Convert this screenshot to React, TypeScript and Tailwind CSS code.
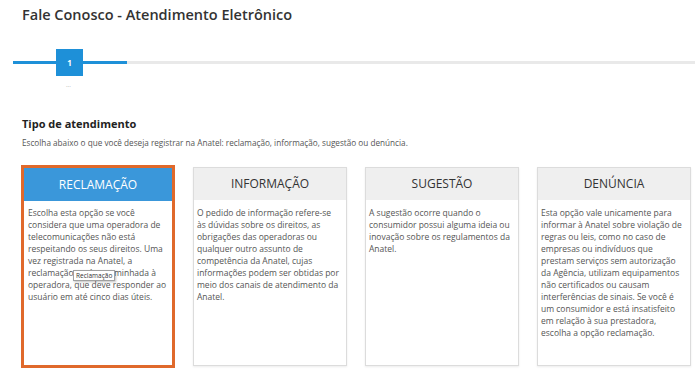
const cards = [
  {
    title: "RECLAMAÇÃO",
    lines: [
      "Escolha esta opção se você",
      "considera que uma operadora de",
      "telecomunicações não está",
      "respeitando os seus direitos. Uma",
      "vez registrada na Anatel, a",
      "reclamação será encaminhada à",
      "operadora, que deve responder ao",
      "usuário em até cinco dias úteis.",
    ],
    active: true,
  },
  {
    title: "INFORMAÇÃO",
    lines: [
      "O pedido de informação refere-se",
      "às dúvidas sobre os direitos, as",
      "obrigações das operadoras ou",
      "qualquer outro assunto de",
      "competência da Anatel, cujas",
      "informações podem ser obtidas por",
      "meio dos canais de atendimento da",
      "Anatel.",
    ],
  },
  {
    title: "SUGESTÃO",
    lines: [
      "A sugestão ocorre quando o",
      "consumidor possui alguma ideia ou",
      "inovação sobre os regulamentos da",
      "Anatel.",
    ],
  },
  {
    title: "DENÚNCIA",
    lines: [
      "Esta opção vale unicamente para",
      "informar à Anatel sobre violação de",
      "regras ou leis, como no caso de",
      "empresas ou indivíduos que",
      "prestam serviços sem autorização",
      "da Agência, utilizam equipamentos",
      "não certificados ou causam",
      "interferências de sinais. Se você é",
      "um consumidor e está insatisfeito",
      "em relação à sua prestadora,",
      "escolha a opção reclamação.",
    ],
  },
]

export default function App() {
  return (
    <div className="w-[695px] h-[371px] overflow-hidden bg-white font-['Open_Sans',sans-serif] text-[#333]">
      {/* Header */}
      <h1 className="pl-[22px] pt-[5px] text-[14.5px] leading-[20px] font-semibold text-[#333]">
        Fale Conosco - Atendimento Eletrônico
      </h1>

      {/* Stepper */}
      <div className="mt-[24px] flex items-center pl-[13px]">
        <div className="w-[43px] h-[3px] bg-[#1e90d8]" />
        <div className="w-[27px] h-[27px] bg-[#1e90d8] flex items-center justify-center text-white text-[8px] font-bold">
          1
        </div>
        <div className="w-[44px] h-[3px] bg-[#1e90d8]" />
        <div className="flex-1 h-[3px] bg-[#e9e9e9]" />
      </div>
      <div className="pl-[66px] mt-[5px] text-[6px] leading-[8px] text-[#999]">...</div>

      {/* Tipo de atendimento */}
      <div className="pl-[22px] mt-[28px]">
        <h2 className="text-[11px] leading-[14px] font-bold text-[#222]">Tipo de atendimento</h2>
        <p className="mt-[6px] text-[8.2px] leading-[11px] text-[#555]">
          Escolha abaixo o que você deseja registrar na Anatel: reclamação, informação, sugestão ou denúncia.
        </p>
      </div>

      {/* Cards */}
      <div className="mt-[17px] ml-[21px] flex items-start gap-[18px]">
        {cards.map((card) =>
          card.active ? (
            <div
              key={card.title}
              className="relative w-[154px] h-[203px] border-[3px] border-[#e0692b] bg-white"
            >
              <div className="h-[33px] bg-[#3a97da] flex items-center justify-center text-white text-[12px]">
                {card.title}
              </div>
              <div className="px-[4px] pt-[6px] text-[8.5px] leading-[12px] text-[#555] whitespace-nowrap">
                {card.lines.map((l) => (
                  <div key={l}>{l}</div>
                ))}
              </div>
              {/* Tooltip */}
              <div className="absolute left-[49px] top-[102px] px-[2px] h-[11px] flex items-center border border-[#a0a0a0] bg-white text-[6.5px] text-[#333] shadow-[1px_1px_2px_rgba(0,0,0,0.25)]">
                Reclamação
              </div>
            </div>
          ) : (
            <div
              key={card.title}
              className="mt-[2px] w-[154px] h-[199px] border border-[#dcdcdc] bg-white shadow-[0_1px_2px_rgba(0,0,0,0.08)]"
            >
              <div className="h-[32px] bg-[#efefef] flex items-center justify-center text-[#333] text-[12px]">
                {card.title}
              </div>
              <div className="px-[3px] pt-[7px] text-[8.5px] leading-[12px] text-[#555] whitespace-nowrap">
                {card.lines.map((l) => (
                  <div key={l}>{l}</div>
                ))}
              </div>
            </div>
          )
        )}
      </div>
    </div>
  )
}
